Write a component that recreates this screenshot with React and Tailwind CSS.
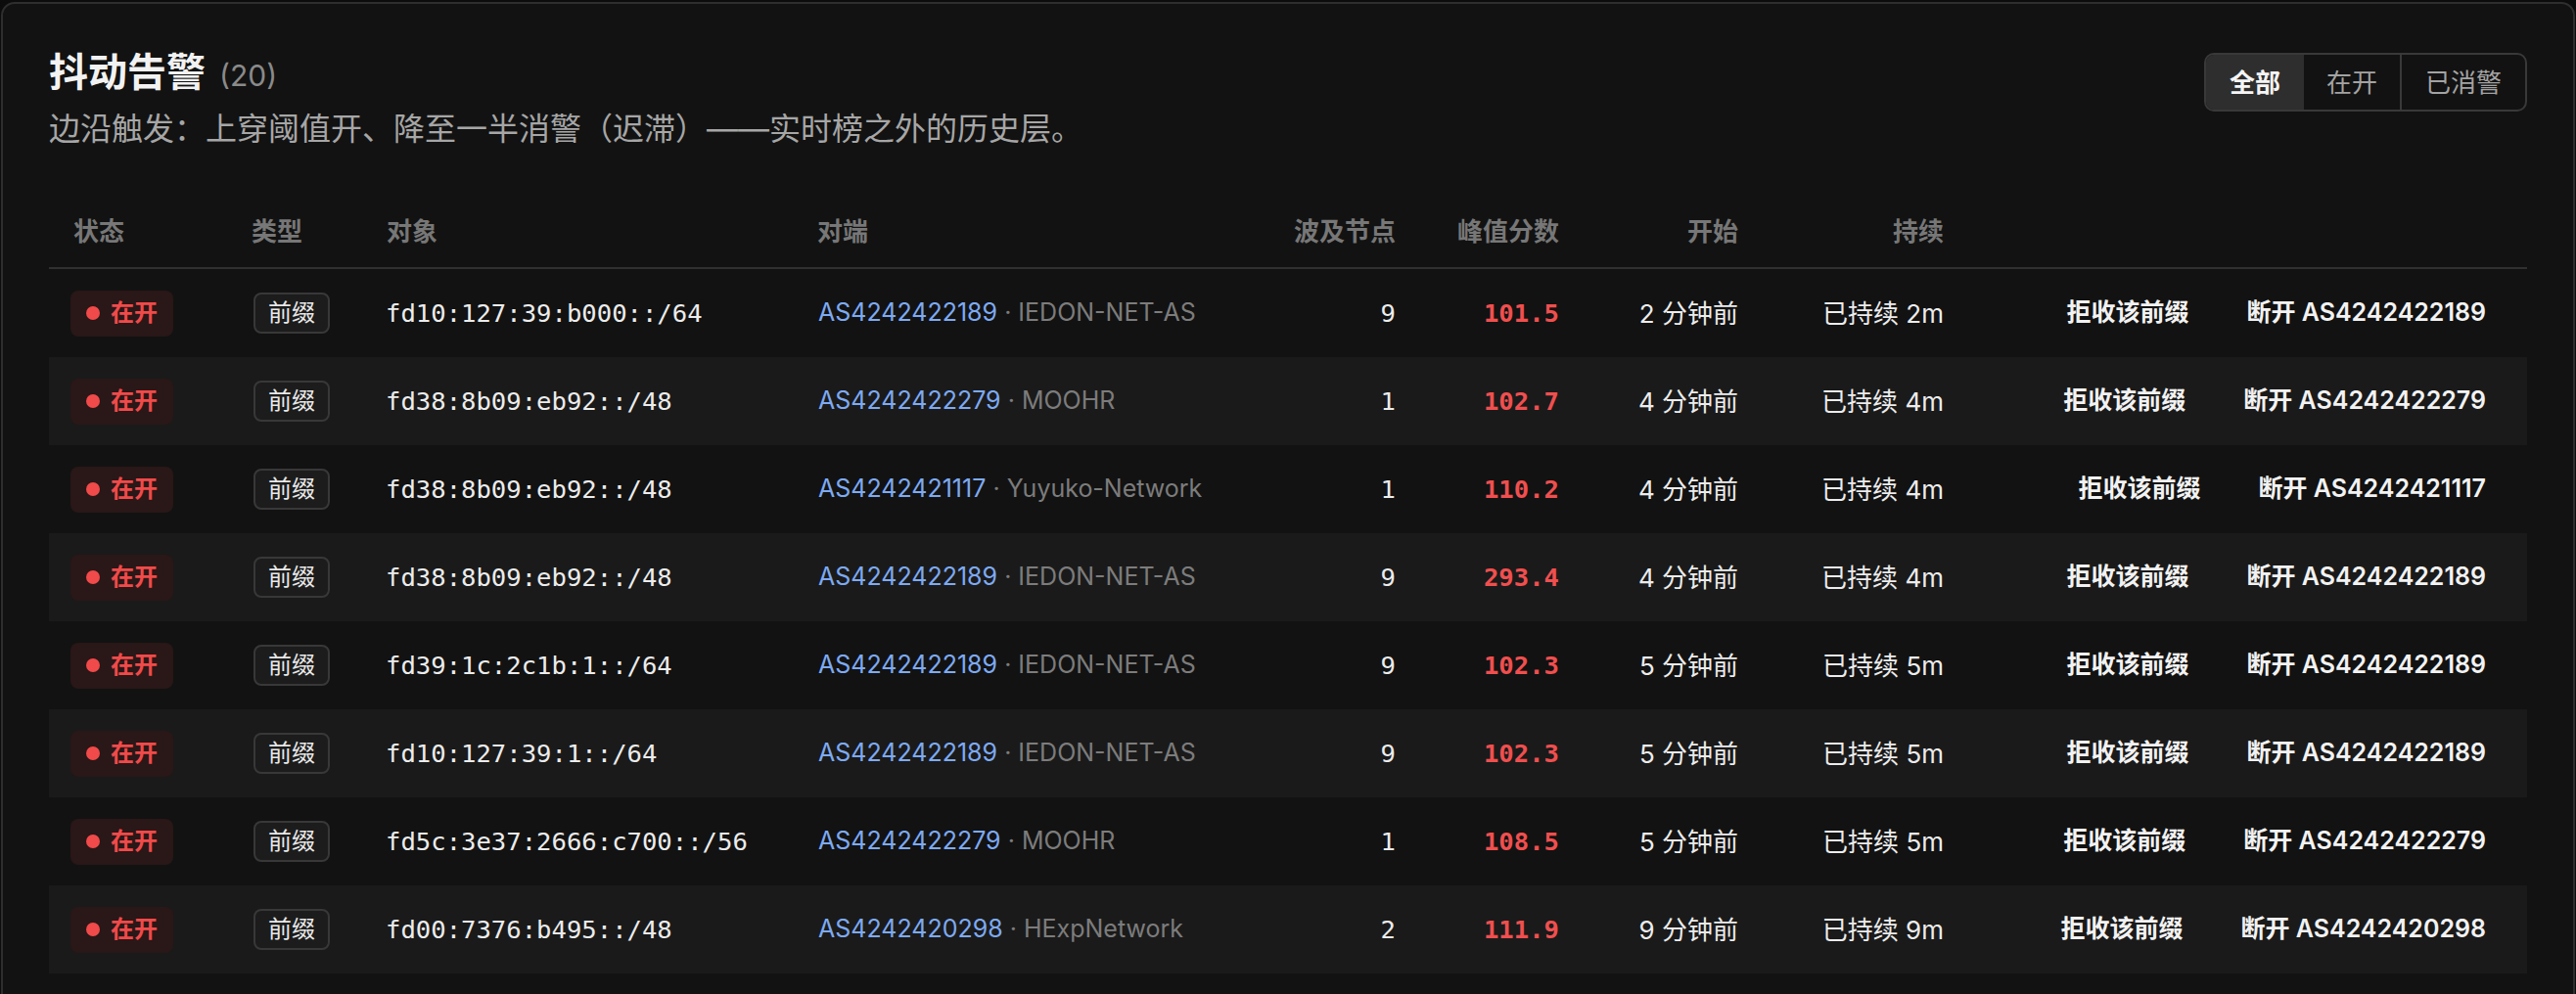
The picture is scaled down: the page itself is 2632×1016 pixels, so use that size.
import React from 'react';

const rows = [
  { prefix: 'fd10:127:39:b000::/64', asn: 'AS4242422189', org: 'IEDON-NET-AS', nodes: 9, score: '101.5', start: '2 分钟前', dur: '已持续 2m' },
  { prefix: 'fd38:8b09:eb92::/48', asn: 'AS4242422279', org: 'MOOHR', nodes: 1, score: '102.7', start: '4 分钟前', dur: '已持续 4m' },
  { prefix: 'fd38:8b09:eb92::/48', asn: 'AS4242421117', org: 'Yuyuko-Network', nodes: 1, score: '110.2', start: '4 分钟前', dur: '已持续 4m' },
  { prefix: 'fd38:8b09:eb92::/48', asn: 'AS4242422189', org: 'IEDON-NET-AS', nodes: 9, score: '293.4', start: '4 分钟前', dur: '已持续 4m' },
  { prefix: 'fd39:1c:2c1b:1::/64', asn: 'AS4242422189', org: 'IEDON-NET-AS', nodes: 9, score: '102.3', start: '5 分钟前', dur: '已持续 5m' },
  { prefix: 'fd10:127:39:1::/64', asn: 'AS4242422189', org: 'IEDON-NET-AS', nodes: 9, score: '102.3', start: '5 分钟前', dur: '已持续 5m' },
  { prefix: 'fd5c:3e37:2666:c700::/56', asn: 'AS4242422279', org: 'MOOHR', nodes: 1, score: '108.5', start: '5 分钟前', dur: '已持续 5m' },
  { prefix: 'fd00:7376:b495::/48', asn: 'AS4242420298', org: 'HExpNetwork', nodes: 2, score: '111.9', start: '9 分钟前', dur: '已持续 9m' },
];

const cols = 'grid grid-cols-[185px_138px_440px_497px_138px_167px_183px_210px_1fr]';
const mono = { fontFamily: '"DejaVu Sans Mono", monospace' };

export default function App() {
  return (
    <div className="min-h-screen bg-[#0c0c0c] pt-[2px] px-[1px]" style={{ fontFamily: 'Inter, "Noto Sans CJK SC", sans-serif' }}>
      <div className="bg-[#121212] border-2 border-[#2e2e2e] rounded-[14px] px-[47px] pt-[45px] pb-[60px]">
        {/* header */}
        <div className="flex items-start justify-between">
          <div>
            <div className="flex items-baseline gap-[14px] leading-[50px]">
              <span className="text-[40px] font-bold text-[#f2f2f2]">抖动告警</span>
              <span className="text-[30px] text-[#8a8a8a]">(20)</span>
            </div>
            <p className="mt-[10px] text-[32px] leading-[40px] text-[#a6a6a6]">边沿触发：上穿阈值开、降至一半消警（迟滞）——实时榜之外的历史层。</p>
          </div>
          <div className="mt-[5px] flex h-[60px] border-2 border-[#393939] rounded-[10px] overflow-hidden text-[26px]">
            <button className="px-[24px] bg-[#2e2e2e] text-[#f5f5f5] font-bold">全部</button>
            <button className="px-[23px] text-[#a3a3a3] border-r-2 border-[#393939]">在开</button>
            <button className="px-[24px] text-[#a3a3a3]">已消警</button>
          </div>
        </div>

        {/* table */}
        <div className="mt-[47px]">
          <div className={`${cols} h-[76px] items-center border-b-2 border-[#303030] text-[26px] font-semibold text-[#777777]`}>
            <div className="pl-[25px]">状态</div>
            <div className="pl-[22px]">类型</div>
            <div className="pl-[22px]">对象</div>
            <div className="pl-[22px]">对端</div>
            <div className="pr-[22px] text-right">波及节点</div>
            <div className="pr-[22px] text-right">峰值分数</div>
            <div className="pr-[22px] text-right">开始</div>
            <div className="pr-[22px] text-right">持续</div>
            <div></div>
          </div>
          {rows.map((r, i) => (
            <div key={i} className={`${cols} h-[90px] items-center ${i % 2 === 1 ? 'bg-[#1a1a1a]' : ''}`}>
              <div className="pl-[22px]">
                <span className="inline-flex items-center gap-[11px] h-[47px] px-[16px] rounded-[8px] bg-[#2a1717] text-[#f04a4a] text-[24px] font-bold">
                  <span className="w-[14px] h-[14px] rounded-full bg-[#f04a4a]"></span>
                  在开
                </span>
              </div>
              <div className="pl-[24px]">
                <span className="inline-flex items-center h-[42px] px-[13px] rounded-[8px] border-2 border-[#383838] bg-[#1c1c1c] text-[24px] text-[#e8e8e8]">前缀</span>
              </div>
              <div className="pl-[21px] text-[25.6px] text-[#ececec]" style={mono}>{r.prefix}</div>
              <div className="pl-[23px] text-[25px] whitespace-nowrap">
                <a className="text-[#7eaaf2]">{r.asn}</a>
                <span className="text-[#7c7c7c]"> · {r.org}</span>
              </div>
              <div className="pr-[22px] text-right text-[25.6px] text-[#ececec]" style={mono}>{r.nodes}</div>
              <div className="pr-[22px] text-right text-[25.6px] font-semibold text-[#f04f4f]" style={mono}>{r.score}</div>
              <div className="pr-[22px] text-right text-[26px] text-[#ececec]">{r.start}</div>
              <div className="pr-[22px] text-right text-[26px] text-[#ececec]">{r.dur}</div>
              <div className="pr-[42px] flex justify-end gap-[59px] text-[25px] font-semibold text-[#f2f2f2] whitespace-nowrap">
                <button>拒收该前缀</button>
                <button>断开 {r.asn}</button>
              </div>
            </div>
          ))}
        </div>
      </div>
    </div>
  );
}
